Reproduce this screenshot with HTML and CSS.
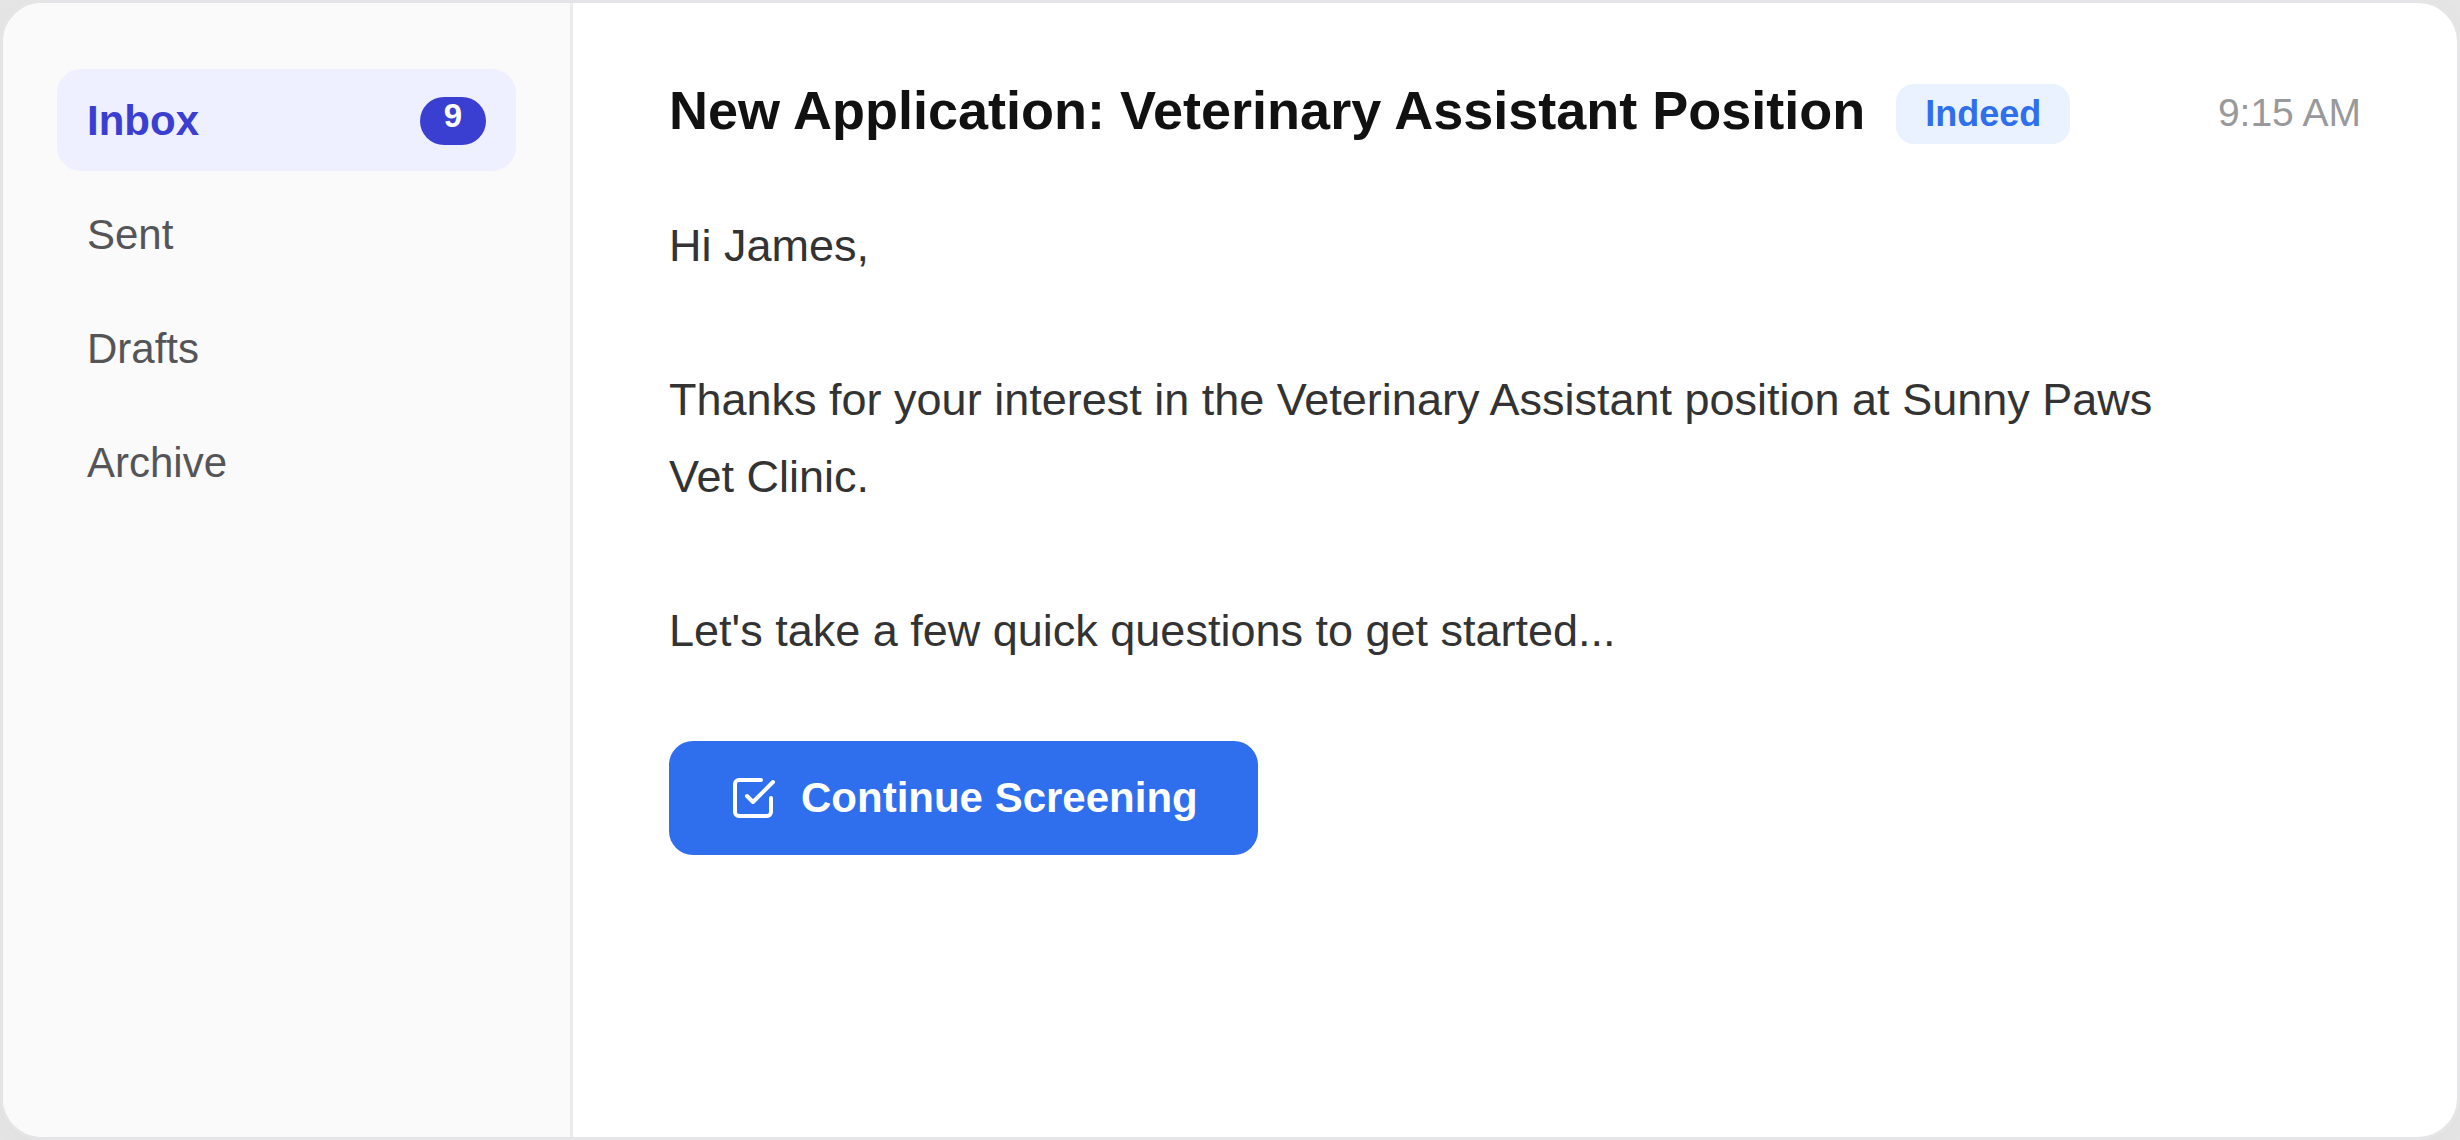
FILE: index.html
```html
<!DOCTYPE html>
<html lang="en">
<head>
  <meta charset="utf-8">
  <title>Inbox</title>
  <link rel="stylesheet" href="styles.css">
</head>
<body>
  <div class="mail">
    <nav class="sidebar" aria-label="Folders">
      <a class="folder folder-active" href="#inbox" aria-current="page">Inbox <span class="count">9</span></a>
      <a class="folder" href="#sent">Sent</a>
      <a class="folder" href="#drafts">Drafts</a>
      <a class="folder" href="#archive">Archive</a>
    </nav>
    <main class="message">
      <header class="message-header">
        <h1 class="subject">New Application: Veterinary Assistant Position</h1>
        <span class="source">Indeed</span>
        <time class="time" datetime="09:15">9:15 AM</time>
      </header>
      <div class="message-body">
        <p>Hi James,</p>
        <p>Thanks for your interest in the Veterinary Assistant position at Sunny Paws Vet Clinic.</p>
        <p>Let's take a few quick questions to get started...</p>
      </div>
      <button class="continue" type="button">
        <svg class="continue-icon" viewBox="0 0 24 24" fill="none" stroke="currentColor" stroke-width="2" stroke-linecap="round" stroke-linejoin="round" aria-hidden="true">
          <path d="M9 11l3 3L22 4"/>
          <path d="M21 12v7a2 2 0 0 1-2 2H5a2 2 0 0 1-2-2V5a2 2 0 0 1 2-2h11"/>
        </svg>
        Continue Screening
      </button>
    </main>
  </div>
</body>
</html>
```

FILE: styles.css
```css
* {
  box-sizing: border-box;
}

body {
  margin: 0;
  background: #e6e6e6;
  font-family: "Liberation Sans", Arial, sans-serif;
}

.mail {
  display: flex;
  min-height: 100vh;
  overflow: hidden;
  background: #fff;
  border: 3px solid #e5e5e7;
  border-radius: 42px;
  box-shadow: 0 12px 72px rgba(0, 0, 0, 0.04);
}

.sidebar {
  display: flex;
  flex: 0 0 570px;
  flex-direction: column;
  gap: 12px;
  padding: 66px 54px;
  background: #fafafa;
  border-right: 3px solid #ececec;
}

.folder {
  display: flex;
  align-items: flex-end;
  justify-content: space-between;
  padding: 28px 30px 26px;
  border-radius: 24px;
  color: #555558;
  font-size: 42px;
  line-height: 48px;
  text-decoration: none;
}

.folder-active {
  background: #eef0ff;
  color: #3b3fd1;
  font-weight: 700;
}

.count {
  height: 48px;
  padding: 0 24px;
  border-radius: 24px;
  background: #3b3fd1;
  color: #fff;
  font-size: 33px;
  line-height: 38px;
}

.message {
  flex: 1;
  min-width: 0;
  padding: 78px 96px;
}

.message-header {
  display: flex;
  align-items: center;
  margin-bottom: 60px;
}

.subject {
  margin: 0;
  padding-bottom: 8px;
  color: #111;
  font-size: 54px;
  font-weight: 700;
  line-height: 58px;
}

.source {
  margin-left: 31px;
  padding: 9px 29px;
  border-radius: 18px;
  background: #eaf1ff;
  color: #2f6fed;
  font-size: 36px;
  font-weight: 700;
  line-height: 42px;
}

.time {
  margin-left: auto;
  padding-bottom: 2px;
  color: #99999c;
  font-size: 39px;
  line-height: 44px;
}

.message-body {
  margin-bottom: 72px;
  max-width: 1560px;
  color: #333;
  font-size: 45px;
  line-height: 77px;
}

.message-body p {
  margin: 0;
}

.message-body p + p {
  margin-top: 77px;
}

.continue {
  display: flex;
  align-items: center;
  gap: 24px;
  padding: 33px 60px;
  border: 0;
  border-radius: 24px;
  background: #2f6fed;
  color: #fff;
  font-family: inherit;
  font-size: 42px;
  font-weight: 700;
  line-height: 48px;
}

.continue-icon {
  width: 48px;
  height: 48px;
}
```
